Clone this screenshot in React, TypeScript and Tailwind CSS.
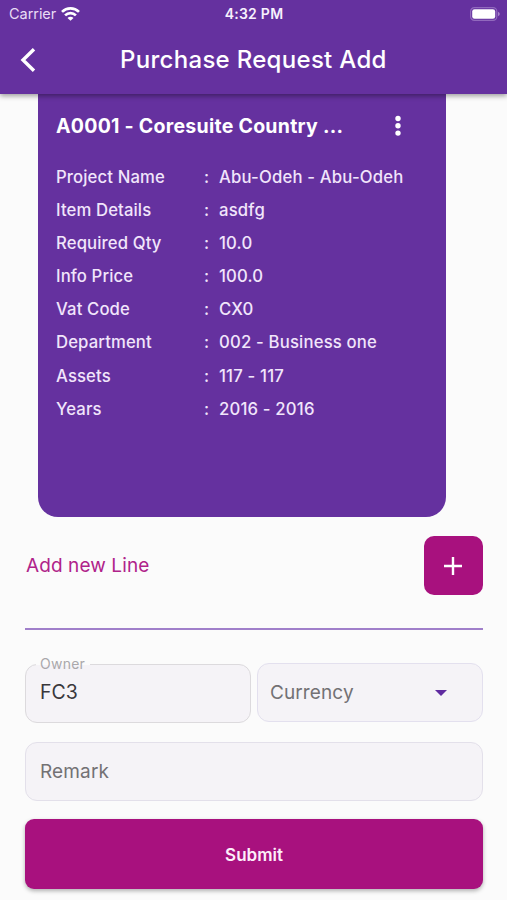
const details: [string, string][] = [
  ['Project Name', 'Abu-Odeh - Abu-Odeh'],
  ['Item Details', 'asdfg'],
  ['Required Qty', '10.0'],
  ['Info Price', '100.0'],
  ['Vat Code', 'CX0'],
  ['Department', '002 - Business one'],
  ['Assets', '117 - 117'],
  ['Years', '2016 - 2016'],
];

function StatusBar() {
  return (
    <div className="grid h-[27px] grid-cols-3 items-center pr-[7px] pl-[9px] leading-none">
      <div className="flex items-center gap-[5px] text-[14.5px] text-[#e9dcf5]">
        <span className="pt-px tracking-[-0.05px]">Carrier</span>
        <svg width="19" height="14" viewBox="0 0 19 14" fill="none" stroke="#fff" strokeWidth="2.7">
          <path d="M1 4.9a12.2 12.2 0 0 1 17 0" />
          <path d="M4.1 8.4a7.7 7.7 0 0 1 10.8 0" />
          <path d="M9.5 13.8 6.5 10.9a4.2 4.2 0 0 1 6 0z" fill="#fff" stroke="none" />
        </svg>
      </div>
      <span className="pr-px text-center text-[14px] font-semibold tracking-[0.25px] text-[#f7f0fd]">4:32 PM</span>
      <svg className="justify-self-end" width="30" height="14" viewBox="0 0 30 14">
        <rect x="0.6" y="0.6" width="26.2" height="12.8" rx="3.8" fill="none" stroke="#9169bd" strokeWidth="1.2" />
        <rect x="2.2" y="2.2" width="23" height="9.6" rx="2.3" fill="#fff" />
        <path d="M28 4.8q1.8.7 1.8 2.2T28 9.2z" fill="#a683cb" />
      </svg>
    </div>
  );
}

function Header() {
  return (
    <header className="relative z-10 h-[94px] bg-[#65319f] text-white shadow-[0_2px_5px_rgba(0,0,0,0.38)]">
      <StatusBar />
      <div className="flex h-[66px] items-center">
        <svg className="ml-[20px] shrink-0" width="16" height="24" viewBox="0 0 16 24" fill="none" stroke="#fff" strokeWidth="3.4">
          <path d="M14 1.2 3 12l11 10.8" />
        </svg>
        <h1 className="ml-[84px] text-[24px] leading-none font-medium tracking-[0.3px] whitespace-nowrap">Purchase Request Add</h1>
      </div>
    </header>
  );
}

function RequestCard() {
  return (
    <section className="ml-[38px] h-[423px] w-[408px] rounded-b-[20px] bg-[#65319f] pt-[20px] pl-[18px] text-[#f1e5fb]">
      <div className="flex h-6 items-center">
        <h2 className="w-[334px] pt-[2px] text-[19.5px] leading-none font-bold tracking-[0.26px] whitespace-nowrap text-white">A0001 - Coresuite Country ...</h2>
        <svg width="16" height="22" viewBox="0 0 16 22" fill="#fff">
          <circle cx="8" cy="3.5" r="2.7" />
          <circle cx="8" cy="10.8" r="2.7" />
          <circle cx="8" cy="18.1" r="2.7" />
        </svg>
      </div>
      <dl className="pt-[23px] text-[16.7px] leading-[33.1px] font-medium tracking-[0.12px]">
        {details.map(([label, value]) => (
          <div key={label} className="flex whitespace-nowrap">
            <dt className="w-[148px]">{label}</dt>
            <span className="w-[15px]">:</span>
            <dd className="tracking-[0.18px]">{value}</dd>
          </div>
        ))}
      </dl>
    </section>
  );
}

export default function App() {
  return (
    <div className="h-[900px] w-[507px] overflow-hidden bg-[#fbfbfb] font-['Inter',sans-serif]">
      <Header />
      <RequestCard />
      <main className="pr-[24px] pl-[25px]">
        <div className="mt-[19px] flex h-[59px] items-center justify-between">
          <span className="pl-px text-[19px] leading-none tracking-[0.1px] text-[#b0238a]">Add new Line</span>
          <button className="flex h-[59px] w-[59px] items-center justify-center rounded-[10px] bg-[#a8117e] pr-px">
            <svg width="18" height="18" viewBox="0 0 18 18" stroke="#fff" strokeWidth="2.4">
              <path d="M9 0v18M0 9h18" />
            </svg>
          </button>
        </div>
        <div className="mt-[33px] h-[2px] bg-[#a07fca]" />
        <div className="mt-[33px] flex gap-[6px]">
          <div className="relative mt-px h-[59px] w-[226px] rounded-[12px] border border-[#dcdadd] bg-[#f5f3f7] pl-[14px]">
            <span className="absolute -top-[9px] left-[10px] bg-[linear-gradient(#fbfbfb_56%,#f5f3f7_56%)] pr-[5px] pl-[4px] text-[14px] leading-[16px] tracking-[0.25px] text-[#aaa8ab]">Owner</span>
            <span className="block text-[19.5px] leading-[55px] text-[#39373b]">FC3</span>
          </div>
          <div className="flex h-[59px] flex-1 items-center justify-between rounded-[12px] border border-[#e3e0ee] bg-[#f5f3f7] pr-[35px] pl-[12px]">
            <span className="text-[19px] leading-none tracking-[0.1px] text-[#737174]">Currency</span>
            <svg width="12" height="6" viewBox="0 0 12 6" fill="#5f2aa0">
              <path d="M0 0h12L6 6z" />
            </svg>
          </div>
        </div>
        <div className="mt-[19px] flex h-[59px] items-center rounded-[12px] border border-[#e3e0ea] bg-[#f5f3f7] pl-[14px]">
          <span className="text-[19px] leading-none tracking-[0.15px] text-[#737174]">Remark</span>
        </div>
        <button className="mt-[18px] h-[70px] w-full rounded-[9px] bg-[#a8117e] pt-[3px] text-[17px] font-semibold text-[#fdeefa] shadow-[0_2px_4px_rgba(0,0,0,0.3)]">Submit</button>
      </main>
    </div>
  );
}
